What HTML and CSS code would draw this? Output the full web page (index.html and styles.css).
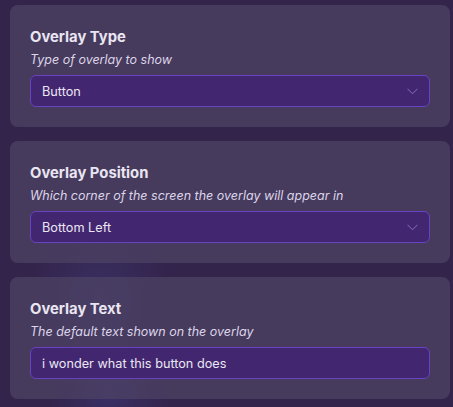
FILE: index.html
```html
<!DOCTYPE html>
<html>
<head>
<meta charset="utf-8">
<link rel="stylesheet" href="styles.css">
</head>
<body>
<div class="panel">
  <section class="card">
    <div class="title">Overlay Type</div>
    <div class="desc">Type of overlay to show</div>
    <div class="select">
      <span>Button</span>
      <svg class="chev" width="11" height="7" viewBox="0 0 11 7"><path d="M0.5 0.8 L5.5 5.8 L10.5 0.8" fill="none" stroke="#8a6cbd" stroke-width="1"/></svg>
    </div>
  </section>
  <section class="card">
    <div class="title">Overlay Position</div>
    <div class="desc">Which corner of the screen the overlay will appear in</div>
    <div class="select">
      <span>Bottom Left</span>
      <svg class="chev" width="11" height="7" viewBox="0 0 11 7"><path d="M0.5 0.8 L5.5 5.8 L10.5 0.8" fill="none" stroke="#8a6cbd" stroke-width="1"/></svg>
    </div>
  </section>
  <section class="card">
    <div class="title">Overlay Text</div>
    <div class="desc">The default text shown on the overlay</div>
    <div class="select">
      <span>i wonder what this button does</span>
    </div>
  </section>
</div>
</body>
</html>
```
FILE: styles.css
```css
html, body {
  margin: 0;
  padding: 0;
  height: 100%;
}
body {
  background-color: #33244c;
  background-image:
    radial-gradient(ellipse 70px 90px at 100px 300px, rgba(70, 70, 140, 0.35), rgba(70, 70, 140, 0)),
    radial-gradient(ellipse 60px 50px at 110px 395px, rgba(70, 70, 150, 0.35), rgba(70, 70, 150, 0));
  font-family: Inter, "Noto Sans", sans-serif;
  overflow: hidden;
}
.panel {
  display: flex;
  flex-direction: column;
  gap: 14px;
  padding: 5px 3px 0 10px;
}
.card {
  background: rgba(78, 66, 100, 0.72);
  border-radius: 8px;
  padding: 23px 20px 20px 20px;
  display: flex;
  flex-direction: column;
}
.title {
  font-size: 14.8px;
  line-height: 18px;
  font-weight: 700;
  color: #e9e5f1;
}
.desc {
  margin-top: 5px;
  font-size: 12.5px;
  line-height: 18px;
  font-style: italic;
  color: #dcd5e9;
}
.select {
  margin-top: 6px;
  height: 32px;
  box-sizing: border-box;
  border: 1px solid #6742c2;
  border-radius: 6px;
  background: #42266f;
  display: flex;
  align-items: center;
  justify-content: space-between;
  padding: 0 11px 0 11px;
  font-size: 12.7px;
  color: #ebe6f3;
}
.chev {
  display: block;
}
```
